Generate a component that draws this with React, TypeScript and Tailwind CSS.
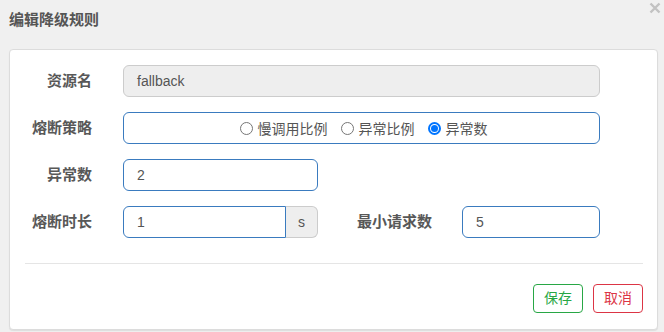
import React from "react";

const font = { fontFamily: '"Liberation Sans", "Noto Sans CJK SC", sans-serif' };

function Radio({ checked, label }: { checked?: boolean; label: string }) {
  return (
    <div className="flex items-center gap-[5px]">
      {checked ? (
        <span className="w-[13px] h-[13px] rounded-full border-[2px] border-[#0075ff] flex items-center justify-center bg-white">
          <span className="w-[7px] h-[7px] rounded-full bg-[#0075ff]" />
        </span>
      ) : (
        <span className="w-[13px] h-[13px] rounded-full border border-[#767676] bg-white" />
      )}
      <span className="text-[14px] text-[#555] leading-none pt-[2px]">{label}</span>
    </div>
  );
}

export default function App() {
  return (
    <div className="w-[664px] h-[332px] bg-[#f0f0f0] relative overflow-hidden" style={font}>
      <svg className="absolute right-[3px] top-[2px]" width="12" height="12" viewBox="0 0 12 12">
        <path d="M1.5 1.5 L10.5 10.5 M10.5 1.5 L1.5 10.5" stroke="#c2c2c2" strokeWidth="2.4" />
      </svg>
      <div className="h-[49px] pl-[9px] pt-[8px]">
        <span className="text-[15px] font-bold text-[#555] leading-[20px]">编辑降级规则</span>
      </div>
      <div className="ml-[9px] w-[649px] h-[281px] bg-white border border-[#dcdcdc] rounded-[4px] shadow-[0_1px_1px_rgba(0,0,0,0.08)] pt-[15px]">
        <div className="flex flex-col gap-[15px]">
          <div className="flex items-center h-[32px]">
            <div className="w-[82px] text-right text-[15px] font-bold text-[#585858] pt-[1px]">资源名</div>
            <div className="ml-[31px] w-[477px] h-[32px] bg-[#eeeeee] border border-[#cccccc] rounded-[6px] flex items-center pl-[13px] text-[14px] text-[#555]">
              fallback
            </div>
          </div>
          <div className="flex items-center h-[32px]">
            <div className="w-[82px] text-right text-[15px] font-bold text-[#585858] pt-[1px]">熔断策略</div>
            <div className="ml-[31px] w-[477px] h-[32px] border border-[#3a7bbf] rounded-[6px] flex items-center justify-center gap-[13px] pl-[4px]">
              <Radio label="慢调用比例" />
              <Radio label="异常比例" />
              <Radio checked label="异常数" />
            </div>
          </div>
          <div className="flex items-center h-[32px]">
            <div className="w-[82px] text-right text-[15px] font-bold text-[#585858] pt-[1px]">异常数</div>
            <div className="ml-[31px] w-[195px] h-[32px] border border-[#3a7bbf] rounded-[6px] flex items-center pl-[13px] text-[14px] text-[#555]">
              2
            </div>
          </div>
          <div className="flex items-center h-[32px]">
            <div className="w-[82px] text-right text-[15px] font-bold text-[#585858] pt-[1px]">熔断时长</div>
            <div className="ml-[31px] w-[195px] h-[32px] flex">
              <div className="w-[163px] h-full border border-[#3a7bbf] rounded-l-[6px] flex items-center pl-[13px] text-[14px] text-[#555]">
                1
              </div>
              <div className="flex-1 h-full bg-[#eeeeee] border border-l-0 border-[#cccccc] rounded-r-[6px] flex items-center justify-center text-[14px] text-[#555]">
                s
              </div>
            </div>
            <div className="ml-[39px] w-[76px] text-[15px] font-bold text-[#585858] pt-[1px]">最小请求数</div>
            <div className="ml-[29px] w-[138px] h-[32px] border border-[#3a7bbf] rounded-[6px] flex items-center pl-[13px] text-[14px] text-[#555]">
              5
            </div>
          </div>
        </div>
        <div className="mx-[15px] mr-[14px] mt-[25px] h-px bg-[#e5e5e5]" />
        <div className="flex justify-end gap-[10px] mr-[14px] mt-[20px]">
          <div className="w-[50px] h-[29px] border border-[#28a745] rounded-[4px] flex items-center justify-center text-[14px] text-[#28a745]">
            保存
          </div>
          <div className="w-[50px] h-[29px] border border-[#dc3545] rounded-[4px] flex items-center justify-center text-[14px] text-[#dc3545]">
            取消
          </div>
        </div>
      </div>
    </div>
  );
}
